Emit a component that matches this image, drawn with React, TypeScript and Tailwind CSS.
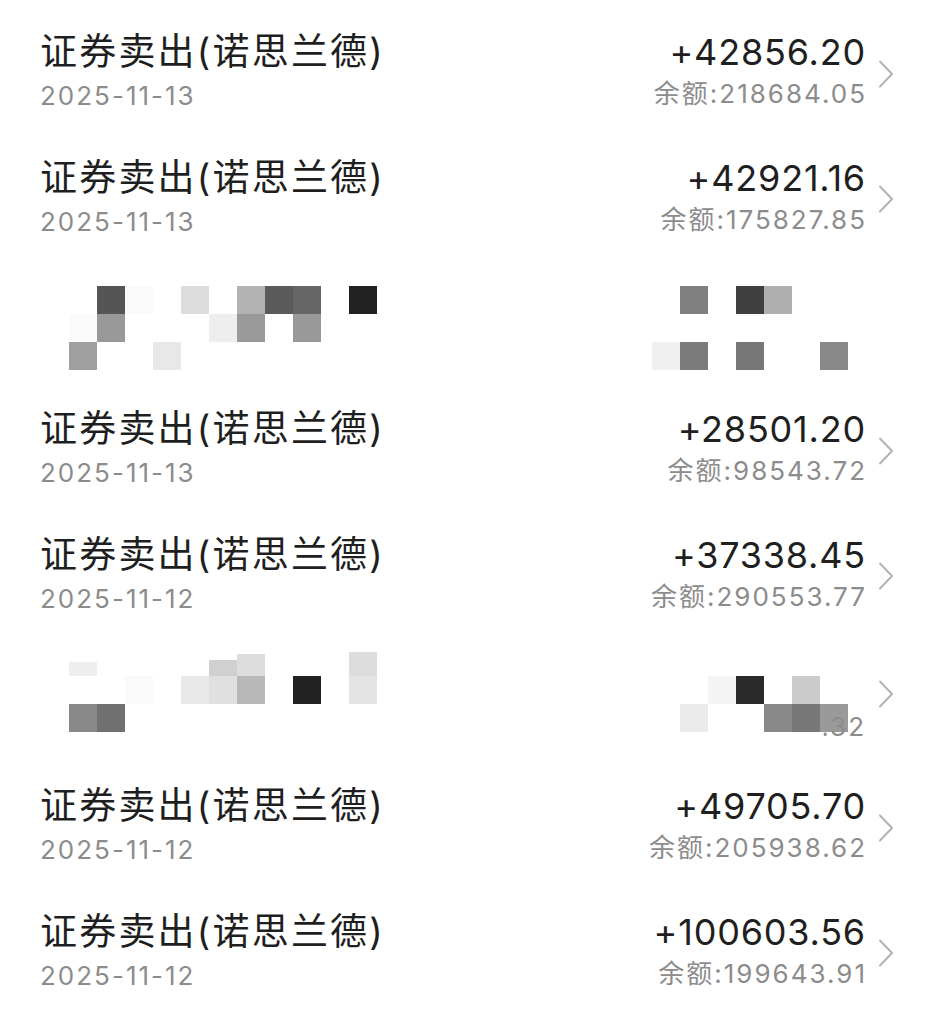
import React from "react";

type Tx = { kind: "tx"; title: string; date: string; amount: string; balance: string };
type Blur = { kind: "blur"; shift: string; left: string[]; right: string[]; tail?: string; chevron?: boolean };
type Row = Tx | Blur;

const rows: Row[] = [
  { kind: "tx", title: "证券卖出(诺思兰德)", date: "2025-11-13", amount: "+42856.20", balance: "余额:218684.05" },
  { kind: "tx", title: "证券卖出(诺思兰德)", date: "2025-11-13", amount: "+42921.16", balance: "余额:175827.85" },
  {
    kind: "blur",
    shift: "mt-[5px]",
    left: [
      "col-start-2 row-start-1 bg-[#555555]",
      "col-start-3 row-start-1 bg-[#fafafa]",
      "col-start-5 row-start-1 bg-[#dddddd]",
      "col-start-7 row-start-1 bg-[#b3b3b3]",
      "col-start-8 row-start-1 bg-[#5a5a5a]",
      "col-start-9 row-start-1 bg-[#666666]",
      "col-start-11 row-start-1 bg-[#222222]",
      "col-start-1 row-start-2 bg-[#fafafa]",
      "col-start-2 row-start-2 bg-[#999999]",
      "col-start-6 row-start-2 bg-[#eeeeee]",
      "col-start-7 row-start-2 bg-[#9a9a9a]",
      "col-start-9 row-start-2 bg-[#999999]",
      "col-start-1 row-start-3 bg-[#9f9f9f]",
      "col-start-4 row-start-3 bg-[#e8e8e8]",
    ],
    right: [
      "col-start-2 row-start-1 bg-[#808080]",
      "col-start-4 row-start-1 bg-[#404040]",
      "col-start-5 row-start-1 bg-[#b0b0b0]",
      "col-start-1 row-start-3 bg-[#f0f0f0]",
      "col-start-2 row-start-3 bg-[#7a7a7a]",
      "col-start-4 row-start-3 bg-[#777777]",
      "col-start-7 row-start-3 bg-[#888888]",
    ],
  },
  { kind: "tx", title: "证券卖出(诺思兰德)", date: "2025-11-13", amount: "+28501.20", balance: "余额:98543.72" },
  { kind: "tx", title: "证券卖出(诺思兰德)", date: "2025-11-12", amount: "+37338.45", balance: "余额:290553.77" },
  {
    kind: "blur",
    shift: "mt-[-10px]",
    left: [
      "col-start-1 row-start-1 bg-[#eeeeee] mt-[14px]",
      "col-start-6 row-start-1 bg-[#d0d0d0] mt-[12px]",
      "col-start-7 row-start-1 bg-[#dddddd] mt-[6px]",
      "col-start-11 row-start-1 bg-[#dddddd] mt-[4px]",
      "col-start-3 row-start-2 bg-[#fafafa]",
      "col-start-5 row-start-2 bg-[#e8e8e8]",
      "col-start-6 row-start-2 bg-[#e0e0e0]",
      "col-start-7 row-start-2 bg-[#b8b8b8]",
      "col-start-9 row-start-2 bg-[#222222]",
      "col-start-11 row-start-2 bg-[#e4e4e4]",
      "col-start-1 row-start-3 bg-[#888888]",
      "col-start-2 row-start-3 bg-[#707070]",
    ],
    right: [
      "col-start-3 row-start-2 bg-[#f4f4f4]",
      "col-start-4 row-start-2 bg-[#2a2a2a]",
      "col-start-6 row-start-2 bg-[#cccccc]",
      "col-start-2 row-start-3 bg-[#eaeaea]",
      "col-start-5 row-start-3 bg-[#888888]",
      "col-start-6 row-start-3 bg-[#777777]",
      "col-start-7 row-start-3 bg-[#999999]",
    ],
    tail: "0.32",
    chevron: true,
  },
  { kind: "tx", title: "证券卖出(诺思兰德)", date: "2025-11-12", amount: "+49705.70", balance: "余额:205938.62" },
  { kind: "tx", title: "证券卖出(诺思兰德)", date: "2025-11-12", amount: "+100603.56", balance: "余额:199643.91" },
];

const font = { fontFamily: 'Inter, "Noto Sans CJK SC", sans-serif' };

function Chevron() {
  return (
    <svg width="16" height="28" viewBox="0 0 16 28" fill="none" className="shrink-0 mt-[8px]">
      <path d="M2 1.5 L14 14 L2 26.5" stroke="#b3b3b3" strokeWidth="2" strokeLinecap="round" strokeLinejoin="round" />
    </svg>
  );
}

function TxRow({ r }: { r: Tx }) {
  return (
    <div className="h-[125.7px] flex items-start justify-between pl-[40px] pr-[51px]">
      <div className="flex flex-col">
        <div className="text-[37px] leading-[44px] text-[#1f1f1f] tracking-[2.2px]">{r.title}</div>
        <div className="mt-[7px] text-[26px] leading-[30px] text-[#8c8c8c] tracking-[2px]">{r.date}</div>
      </div>
      <div className="flex items-center gap-[13px]">
        <div className="flex flex-col items-end">
          <div className="text-[36px] leading-[44px] text-[#1f1f1f] tracking-[0.8px] mr-[-1px]">{r.amount}</div>
          <div className="mt-[5px] text-[26px] leading-[30px] text-[#8c8c8c] tracking-[2px] mr-[-2px]">{r.balance}</div>
        </div>
        <Chevron />
      </div>
    </div>
  );
}

function BlurRow({ r }: { r: Blur }) {
  return (
    <div className="h-[125.7px] flex items-start justify-between pl-[69px] pr-[51px]">
      <div className={"grid grid-cols-[repeat(11,28px)] grid-rows-[repeat(3,28px)] " + r.shift}>
        {r.left.map((c, i) => (
          <div key={i} className={c} />
        ))}
      </div>
      <div className={"flex items-center gap-[13px] " + r.shift}>
        <div className="relative pr-[17px]">
          <div className="grid grid-cols-[repeat(7,28px)] grid-rows-[repeat(3,28px)]">
            {r.right.map((c, i) => (
              <div key={i} className={c} />
            ))}
          </div>
          {r.tail && (
            <div className="absolute right-[-1px] bottom-[-10px] text-[26px] leading-[30px] text-[#8c8c8c] tracking-[2px] [clip-path:inset(0_0_0_32%)]">
              {r.tail}
            </div>
          )}
        </div>
        {r.chevron ? <Chevron /> : <div className="w-[16px]" />}
      </div>
    </div>
  );
}

export default function App() {
  return (
    <div className="w-[945px] h-[1024px] bg-white overflow-hidden pt-[30px]" style={font}>
      {rows.map((r, i) => (r.kind === "tx" ? <TxRow key={i} r={r} /> : <BlurRow key={i} r={r} />))}
    </div>
  );
}
